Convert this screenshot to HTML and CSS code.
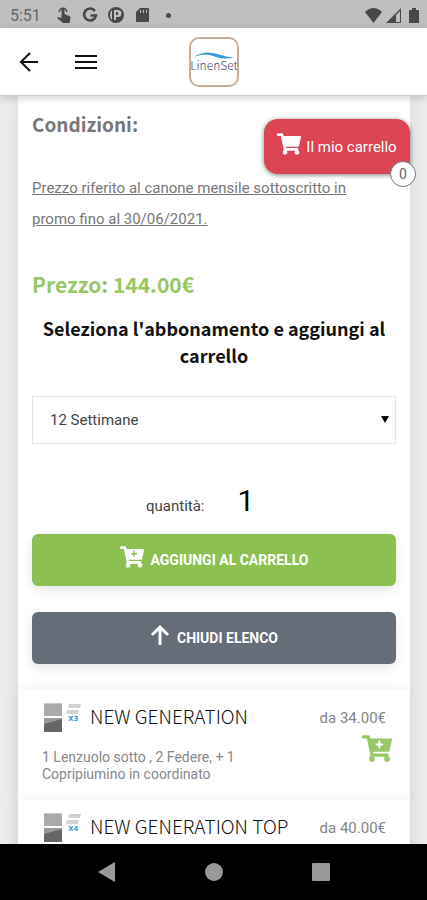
FILE: index.html
```html
<!DOCTYPE html>
<html lang="it">
<head>
<meta charset="utf-8">
<meta name="viewport" content="width=device-width, initial-scale=1">
<title>LinenSet</title>
<link rel="stylesheet" href="styles.css">
</head>
<body>
<svg width="0" height="0" class="sprite" aria-hidden="true">
  <symbol id="cart" viewBox="0 0 576 512"><path d="M528 301l47-208c4-15-8-29-23-29H159l-9-45C148 8 138 0 127 0H24C11 0 0 11 0 24v16c0 13 11 24 24 24h70l70 343c-17 10-28 28-28 49 0 31 25 56 56 56s56-25 56-56c0-16-6-30-17-40h210c-11 10-17 24-17 40 0 31 25 56 56 56s56-25 56-56c0-22-13-41-32-50l6-25c3-15-8-29-24-29H218l-6-32h293c11 0 21-8 23-19z"/></symbol>
  <symbol id="cart-plus" viewBox="0 0 576 512"><path fill-rule="evenodd" d="M528 301l47-208c4-15-8-29-23-29H159l-9-45C148 8 138 0 127 0H24C11 0 0 11 0 24v16c0 13 11 24 24 24h70l70 343c-17 10-28 28-28 49 0 31 25 56 56 56s56-25 56-56c0-16-6-30-17-40h210c-11 10-17 24-17 40 0 31 25 56 56 56s56-25 56-56c0-22-13-41-32-50l6-25c3-15-8-29-24-29H218l-6-32h293c11 0 21-8 23-19zM316 106h36v54h54v36h-54v54h-36v-54h-54v-36h54z"/></symbol>
  <symbol id="linen" viewBox="0 0 38 31">
    <path fill="#aaa" d="M0 1h18v13H0z"/><path fill="#ccc" d="M0 1h18v1H0z"/>
    <path fill="#999" d="M0 16h18v14H0z"/><path fill="#666" d="M0 22l18-5v13H0z"/>
    <path fill="#d2d2d2" d="M25 2h12l-1 4H24zM23 8h12l-1 4H22z"/>
  </symbol>
</svg>

<div class="status">
  <span class="clock">5:51</span>
  <svg class="i16" viewBox="0 0 16 16"><path d="M5.500 9V3a1.500 1.500 0 013 0v4l5 2q1 .5 1 2l-1 5H7L1 11l1-1 3.500 1zM2.500 5a4.500 4.500 0 019 0H10a3 3 0 00-6 0z"/></svg>
  <svg class="i16 g" viewBox="0 0 16 16"><path fill="none" stroke="currentColor" stroke-width="2.600" d="M13 4A6 6 0 1 0 14 8.500H8.500"/></svg>
  <svg class="i16" viewBox="0 0 16 16"><path fill-rule="evenodd" d="M8 0a8 8 0 100 16A8 8 0 008 0zM6 3h4a3 3 0 010 7H8v3H6zM2 8a6 6 0 012-5v10a6 6 0 01-2-5z"/><path d="M8 5h2v3H8z"/></svg>
  <svg class="i16" viewBox="0 0 16 16"><path fill-rule="evenodd" d="M6 1h8q1 0 1 1v12q0 1-1 1H3q-1 0-1-1V5zM6 3v3h1V3zm3 0v3h1V3zm3 0v3h1V3z"/></svg>
  <span class="dot"></span>
  <span class="space"></span>
  <svg class="wifi" viewBox="0 0 17 15"><path d="M0 4Q8.500-4 17 4L8.500 15z"/></svg>
  <svg class="signal" viewBox="0 0 15 15"><path fill-rule="evenodd" d="M0 15L15 0v15zM10 7v7h4V3z"/></svg>
  <svg class="battery" viewBox="0 0 10 15"><path d="M3 0h4v2h3v13H0V2h3z"/></svg>
</div>

<header class="bar">
  <button class="icon-btn" aria-label="Indietro"><svg width="20" height="20" viewBox="0 0 20 20"><path d="M11 1L2 10l9 9M2 10h17"/></svg></button>
  <button class="icon-btn" aria-label="Menu"><svg width="22" height="20" viewBox="0 0 22 20"><path d="M0 4h22M0 10h22M0 16h22"/></svg></button>
  <a class="logo" href="#" aria-label="LinenSet">
    <svg viewBox="0 0 46 46"><path fill="#3b9be0" d="M3 18Q14 10 30 16q9 3 14 2-10 3-19 0Q14 13 3 18z"/><text x="23" y="31" text-anchor="middle">LinenSet</text></svg>
  </a>
</header>

<main class="page">
  <a class="my-cart" href="#"><svg class="cart"><use href="#cart"/></svg><span>Il mio carrello</span><span class="badge">0</span></a>
  <section class="card">
    <div class="product">
      <h2 class="conditions">Condizioni:</h2>
      <p class="note">Prezzo riferito al canone mensile sottoscritto in promo fino al 30/06/2021.</p>
      <h2 class="price">Prezzo: 144.00€</h2>
      <h3 class="choose">Seleziona l'abbonamento e aggiungi al carrello</h3>
      <div class="select-wrap">
        <select aria-label="Abbonamento"><option>12 Settimane</option></select>
      </div>
      <div class="quantity"><label for="qty">quantità:</label><input id="qty" type="text" inputmode="numeric" value="1"></div>
      <button class="btn add"><svg class="cart"><use href="#cart-plus"/></svg><span>AGGIUNGI AL CARRELLO</span></button>
      <button class="btn close"><svg class="arrow" viewBox="0 0 20 20"><path d="M2 10l8-8 8 8M10 2v18"/></svg><span>CHIUDI ELENCO</span></button>
    </div>
    <ul class="items">
      <li class="item">
        <div class="row"><svg class="thumb" viewBox="0 0 38 31"><use href="#linen"/><text x="24" y="19">X3</text></svg><h4>NEW GENERATION</h4><span class="from">da 34.00€</span></div>
        <div class="row details"><p>1 Lenzuolo sotto , 2 Federe, + 1 Copripiumino in coordinato</p><button class="quick" aria-label="Aggiungi"><svg><use href="#cart-plus"/></svg></button></div>
      </li>
      <li class="item">
        <div class="row"><svg class="thumb" viewBox="0 0 38 31"><use href="#linen"/><text x="24" y="19">X4</text></svg><h4>NEW GENERATION TOP</h4><span class="from">da 40.00€</span></div>
      </li>
    </ul>
  </section>
</main>

<nav class="system">
  <button aria-label="Indietro"><svg viewBox="0 0 20 20"><path d="M18 0v20L1 10z"/></svg></button>
  <button aria-label="Home"><svg viewBox="0 0 20 20"><circle cx="10" cy="10" r="9"/></svg></button>
  <button aria-label="Recenti"><svg viewBox="0 0 20 20"><rect x="1" y="1" width="18" height="18" rx="1"/></svg></button>
</nav>
</body>
</html>
```
FILE: styles.css
```css
* { box-sizing: border-box; }
body {
  margin: 0;
  height: 100vh;
  display: flex;
  flex-direction: column;
  overflow: hidden;
  background: #ececec;
  color: #777;
  font-family: Roboto, sans-serif;
  font-size: 15px;
}
h2, h3, h4, p, ul { margin: 0; padding: 0; }
button { font: inherit; border: 0; padding: 0; background: none; color: inherit; }
.sprite { position: absolute; }
svg { fill: currentColor; flex: none; }

.status {
  flex: none;
  height: 28px;
  display: flex;
  align-items: center;
  gap: 10px;
  padding: 2px 8px 0 10px;
  background: #bfbfbf;
  color: #484848;
}
.clock { font-size: 16px; width: 36px; color: #666; }
.i16 { width: 16px; height: 16px; }
.dot { width: 5px; height: 5px; border-radius: 50%; background: currentColor; margin-left: 6px; }
.space { flex: 1; }
.wifi { width: 17px; height: 15px; margin-right: -6px; }
.signal { width: 15px; height: 15px; margin-right: -2px; }
.battery { width: 10px; height: 15px; }

.bar {
  flex: none;
  height: 68px;
  display: grid;
  grid-template-columns: 58px 56px 1fr;
  align-items: center;
  position: relative;
  z-index: 2;
  background: #fff;
  border-bottom: 1px solid #c8c8c8;
  box-shadow: 0 2px 8px rgba(0, 0, 0, .18);
}
.icon-btn { height: 48px; display: grid; place-items: center; color: #111; }
.icon-btn svg { fill: none; stroke: currentColor; stroke-width: 2; }
.logo {
  position: absolute;
  left: 50%;
  top: 50%;
  transform: translate(-50%, -50%);
  width: 50px;
  height: 50px;
  border: 2px solid #c9ad97;
  border-radius: 10px;
  overflow: hidden;
}
.logo svg { display: block; width: 46px; height: 46px; }
.logo text { font: 300 12px "Noto Sans CJK SC", sans-serif; fill: #4b4870; }

.page { flex: 1; min-height: 0; overflow: hidden; position: relative; padding: 0 17px 0 18px; }
.card { background: #fff; box-shadow: 0 0 18px rgba(0, 0, 0, .07); }
.product { padding: 10px 14px 26px; }
.conditions, .price, .choose { font-family: "Noto Sans CJK SC", sans-serif; font-weight: 700; }
.conditions { font-size: 19px; line-height: 36px; }
.note { margin-top: 31px; padding-right: 24px; line-height: 31px; text-decoration: underline; }
.price { margin-top: 31px; font-size: 21px; line-height: 36px; color: #98c866; }
.choose { margin-top: 13px; font-size: 18px; line-height: 27px; color: #111; text-align: center; }
.select-wrap { margin-top: 27px; position: relative; }
.select-wrap::after {
  content: "";
  position: absolute;
  right: 7px;
  top: 20px;
  border: 4px solid transparent;
  border-top: 7px solid #000;
  border-bottom: 0;
  pointer-events: none;
}
select {
  appearance: none;
  display: block;
  width: 100%;
  height: 48px;
  padding: 0 17px;
  border: 1px solid #e4e4e4;
  border-radius: 0;
  background: #fff;
  color: #444;
  font: 15px Roboto, sans-serif;
}
.quantity { height: 60px; margin: 30px 0 0 114px; display: flex; align-items: baseline; gap: 33px; color: #444; padding-top: 8px; }
.quantity input { width: 60px; height: 36px; border: 0; padding: 0; background: none; color: #000; font: 30px Roboto, sans-serif; }
.btn {
  width: 100%;
  height: 52px;
  display: flex;
  align-items: center;
  justify-content: center;
  gap: 7px;
  border-radius: 6px;
  color: #fff;
  font-size: 14px;
  font-weight: 700;
  box-shadow: 0 4px 12px rgba(0, 0, 0, .1);
}
.btn svg { margin-bottom: 6px; }
.cart { width: 24px; height: 22px; }
.add { background: #8cc152; }
.close { margin-top: 26px; background: #656d78; }
.arrow { width: 20px; height: 20px; fill: none; stroke: currentColor; stroke-width: 3; }

.items { list-style: none; }
.item { height: 110px; padding: 12px 24px 0; background: #fff; box-shadow: 0 0 14px rgba(0, 0, 0, .07); }
.row { display: flex; align-items: center; }
.thumb { width: 38px; height: 31px; margin: 0 8px 0 2px; }
.thumb text { font: bold 7px "DejaVu Sans", sans-serif; fill: #3b9bdc; }
.item h4 { flex: 1; font: 300 19px/27px "Noto Sans CJK SC", sans-serif; padding-bottom: 4px; color: #111; }
.from { color: #858585; }
.details { justify-content: space-between; align-items: flex-start; }
.details p { width: 230px; margin-top: 16px; font-size: 14px; line-height: 17px; color: #888; }
.quick { margin: 2px -6px 0 0; color: #98c866; }
.quick svg { display: block; width: 30px; height: 27px; }

.my-cart {
  position: absolute;
  z-index: 1;
  right: 17px;
  top: 23px;
  width: 146px;
  height: 55px;
  display: flex;
  align-items: center;
  justify-content: center;
  gap: 5px;
  border-radius: 14px;
  background: #da4453;
  color: #fff;
  text-decoration: none;
  box-shadow: 0 1px 5px rgba(0, 0, 0, .5);
}
.my-cart .cart { margin-bottom: 6px; }
.badge {
  position: absolute;
  right: -6px;
  bottom: -13px;
  width: 26px;
  height: 26px;
  border: 1px solid #777;
  border-radius: 50%;
  background: #fff;
  color: #666;
  font-size: 14px;
  line-height: 24px;
  text-align: center;
}

.system {
  flex: none;
  height: 56px;
  display: flex;
  justify-content: center;
  align-items: center;
  gap: 87px;
  background: #000;
  color: #999;
  position: relative;
}
.system svg { display: block; width: 20px; height: 20px; }
```
